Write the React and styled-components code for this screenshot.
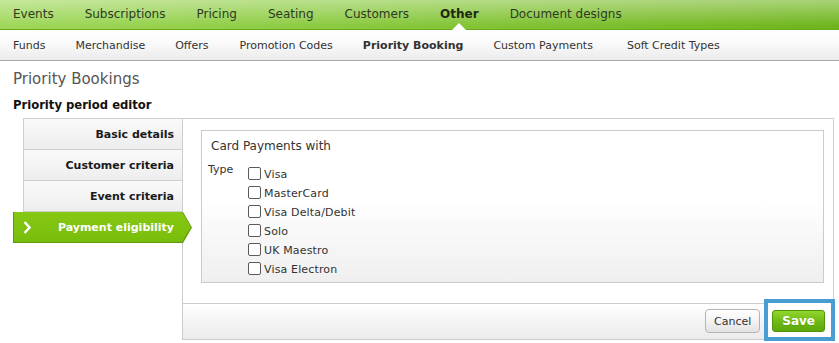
import React from "react";
import styled, { createGlobalStyle, css } from "styled-components";

const GlobalStyle = createGlobalStyle`
  html, body { margin: 0; padding: 0; background: #fff; }
  body { font-family: "DejaVu Sans", Verdana, sans-serif; color: #333; }
  * { box-sizing: border-box; }
`;

const Page = styled.div`
  width: 839px;
  height: 343px;
  overflow: hidden;
`;

const TopNav = styled.nav`
  display: flex;
  align-items: center;
  gap: 31px;
  height: 30px;
  padding: 0 0 1px 13px;
  background:
    linear-gradient(to bottom, rgba(255, 255, 255, 0.4), rgba(255, 255, 255, 0) 90%),
    linear-gradient(to right, #9fd85a 0%, #88c83c 45%, #6fb41c 100%);
  border-bottom: 1px solid #6aa81e;
`;

const TopItem = styled.span`
  position: relative;
  font-size: 12px;
  line-height: 29px;
  color: ${(p) => (p.$active ? "#1e2a12" : "#2d3a22")};
  font-weight: ${(p) => (p.$active ? 700 : 400)};
  white-space: nowrap;
  ${(p) =>
    p.$active &&
    css`
      &::after {
        content: "";
        position: absolute;
        left: 50%;
        bottom: -1px;
        margin-left: -7px;
        border-left: 7px solid transparent;
        border-right: 7px solid transparent;
        border-bottom: 7px solid #fff;
      }
    `}
`;

const SubNav = styled.nav`
  display: flex;
  align-items: center;
  gap: 30px;
  height: 31px;
  padding-left: 13px;
  background: linear-gradient(to bottom, #ffffff 0%, #fbfbfb 40%, #ebebeb 100%);
  border-bottom: 1px solid #a8a8a8;
`;

const SubItem = styled.span`
  font-size: 11px;
  line-height: 29px;
  color: #333;
  font-weight: ${(p) => (p.$active ? 700 : 400)};
  white-space: nowrap;
  margin-left: ${(p) => p.$extra || 0}px;
`;

const Content = styled.main`
  padding: 9px 5px 0 13px;
`;

const Title = styled.h1`
  margin: 0;
  font-size: 15px;
  line-height: 18px;
  font-weight: 400;
  color: #555;
`;

const Subtitle = styled.h2`
  margin: 9px 0 0;
  font-size: 11.6px;
  line-height: 16px;
  font-weight: 700;
  color: #111;
`;

const Editor = styled.div`
  display: flex;
  margin-top: 5px;
`;

const TabList = styled.div`
  width: 169px;
  flex: none;
  display: flex;
  flex-direction: column;
`;

const Tab = styled.div`
  display: flex;
  align-items: center;
  justify-content: flex-end;
  height: ${(p) => (p.$first ? 32 : 31)}px;
  margin-left: 10px;
  padding-right: 8px;
  border-left: 1px solid #cfcfcf;
  border-top: ${(p) => (p.$first ? "1px solid #cfcfcf" : "none")};
  border-bottom: 1px solid #cfcfcf;
  background: linear-gradient(to bottom, #fafafa 0%, #ededed 100%);
  font-size: 11px;
  font-weight: 700;
  color: #1a1a1a;
  white-space: nowrap;
`;

const arrowShape = css`
  clip-path: polygon(0 0, calc(100% - 9px) 0, 100% 50%, calc(100% - 9px) 100%, 0 100%);
`;

const ActiveTab = styled.div`
  position: relative;
  z-index: 2;
  display: flex;
  align-items: center;
  justify-content: space-between;
  height: 31px;
  width: 179px;
  padding: 0 18px 1px 10px;
  background: #5c9a0a;
  ${arrowShape}
  font-size: 11px;
  font-weight: 700;
  color: #fff;
  white-space: nowrap;

  &::before {
    content: "";
    position: absolute;
    top: 0;
    left: 1px;
    right: 1px;
    bottom: 1px;
    background: linear-gradient(to bottom, #86c812 0%, #79bd0c 100%);
    ${arrowShape}
  }

  & > * {
    position: relative;
  }
`;

const Panel = styled.section`
  flex: 1;
  display: flex;
  flex-direction: column;
  height: 222px;
  border: 1px solid #cdcdcd;
`;

const PanelBody = styled.div`
  flex: 1;
  padding: 11px 9px 18px 18px;
`;

const Group = styled.fieldset`
  margin: 0;
  padding: 7px 6px 3px 6px;
  border: 1px solid #cbcbcb;
  background: linear-gradient(to bottom, #ffffff 45%, #efefef 100%);
  min-inline-size: 0;
`;

const GroupTitle = styled.div`
  margin-left: 3px;
  font-size: 12px;
  line-height: 17px;
  color: #333;
`;

const FieldRow = styled.div`
  display: flex;
  margin-top: 8px;
`;

const FieldLabel = styled.div`
  width: 40px;
  flex: none;
  font-size: 11px;
  line-height: 14px;
  color: #333;
`;

const OptionList = styled.div`
  display: flex;
  flex-direction: column;
  margin-top: 2px;
`;

const Option = styled.label`
  display: flex;
  align-items: center;
  height: 19px;
  font-size: 11px;
  color: #333;
  letter-spacing: 0.15px;
`;

const Check = styled.input.attrs({ type: "checkbox" })`
  appearance: none;
  width: 13px;
  height: 13px;
  margin: -2px 3px 0 0;
  border: 1px solid #5a5a5a;
  border-radius: 2px;
  background: #fff;
`;

const Footer = styled.footer`
  display: flex;
  align-items: flex-start;
  justify-content: flex-end;
  height: 36px;
  border-top: 1px solid #cdcdcd;
  background: linear-gradient(to bottom, #ffffff 0%, #f6f6f6 40%, #ebebeb 100%);
`;

const Button = styled.button`
  font-family: "DejaVu Sans", Verdana, sans-serif;
  cursor: pointer;
  white-space: nowrap;
  ${(p) =>
    p.$primary
      ? css`
          height: 22px;
          padding: 0 9px;
          border: 1px solid #4f9308;
          border-radius: 3px;
          background: linear-gradient(to bottom, #93d62c 0%, #6cb814 55%, #5ba80b 100%);
          color: #fff;
          font-size: 12px;
          font-weight: 700;
          text-shadow: 0 1px 0 rgba(0, 0, 0, 0.15);
        `
      : css`
          height: 24px;
          margin-top: 5px;
          padding: 0 8px;
          border: 1px solid #b4b4b4;
          border-radius: 4px;
          background: linear-gradient(to bottom, #ffffff 0%, #f3f3f3 50%, #e2e2e2 100%);
          color: #333;
          font-size: 11px;
        `}
`;

const Highlight = styled.div`
  position: relative;
  display: flex;
  align-items: flex-start;
  height: 42px;
  margin: -5px -2px 0 4px;
  padding: 7px 6px 0 4px;
  border: 4px solid #4a9dd4;
  background: #fff;
`;

const Chevron = () => (
  <svg width="8" height="13" viewBox="0 0 8 13" aria-hidden="true">
    <polyline points="1.5,1 6.5,6.5 1.5,12" fill="none" stroke="#fff" strokeWidth="2.4" />
  </svg>
);

const topItems = ["Events", "Subscriptions", "Pricing", "Seating", "Customers", "Other", "Document designs"];
const subItems = [
  ["Funds", 0],
  ["Merchandise", 0],
  ["Offers", 0],
  ["Promotion Codes", 1],
  ["Priority Booking", 0],
  ["Custom Payments", 0],
  ["Soft Credit Types", 4],
];
const tabs = ["Basic details", "Customer criteria", "Event criteria"];
const cards = ["Visa", "MasterCard", "Visa Delta/Debit", "Solo", "UK Maestro", "Visa Electron"];

export default function App() {
  return (
    <Page>
      <GlobalStyle />
      <TopNav>
        {topItems.map((t) => (
          <TopItem key={t} $active={t === "Other"}>
            {t}
          </TopItem>
        ))}
      </TopNav>
      <SubNav>
        {subItems.map(([t, extra]) => (
          <SubItem key={t} $extra={extra} $active={t === "Priority Booking"}>
            {t}
          </SubItem>
        ))}
      </SubNav>
      <Content>
        <Title>Priority Bookings</Title>
        <Subtitle>Priority period editor</Subtitle>
        <Editor>
          <TabList>
            {tabs.map((t, i) => (
              <Tab key={t} $first={i === 0}>
                {t}
              </Tab>
            ))}
            <ActiveTab>
              <Chevron />
              <span>Payment eligibility</span>
            </ActiveTab>
          </TabList>
          <Panel>
            <PanelBody>
              <Group>
                <GroupTitle>Card Payments with</GroupTitle>
                <FieldRow>
                  <FieldLabel>Type</FieldLabel>
                  <OptionList>
                    {cards.map((c) => (
                      <Option key={c}>
                        <Check />
                        {c}
                      </Option>
                    ))}
                  </OptionList>
                </FieldRow>
              </Group>
            </PanelBody>
            <Footer>
              <Button>Cancel</Button>
              <Highlight>
                <Button $primary>Save</Button>
              </Highlight>
            </Footer>
          </Panel>
        </Editor>
      </Content>
    </Page>
  );
}
